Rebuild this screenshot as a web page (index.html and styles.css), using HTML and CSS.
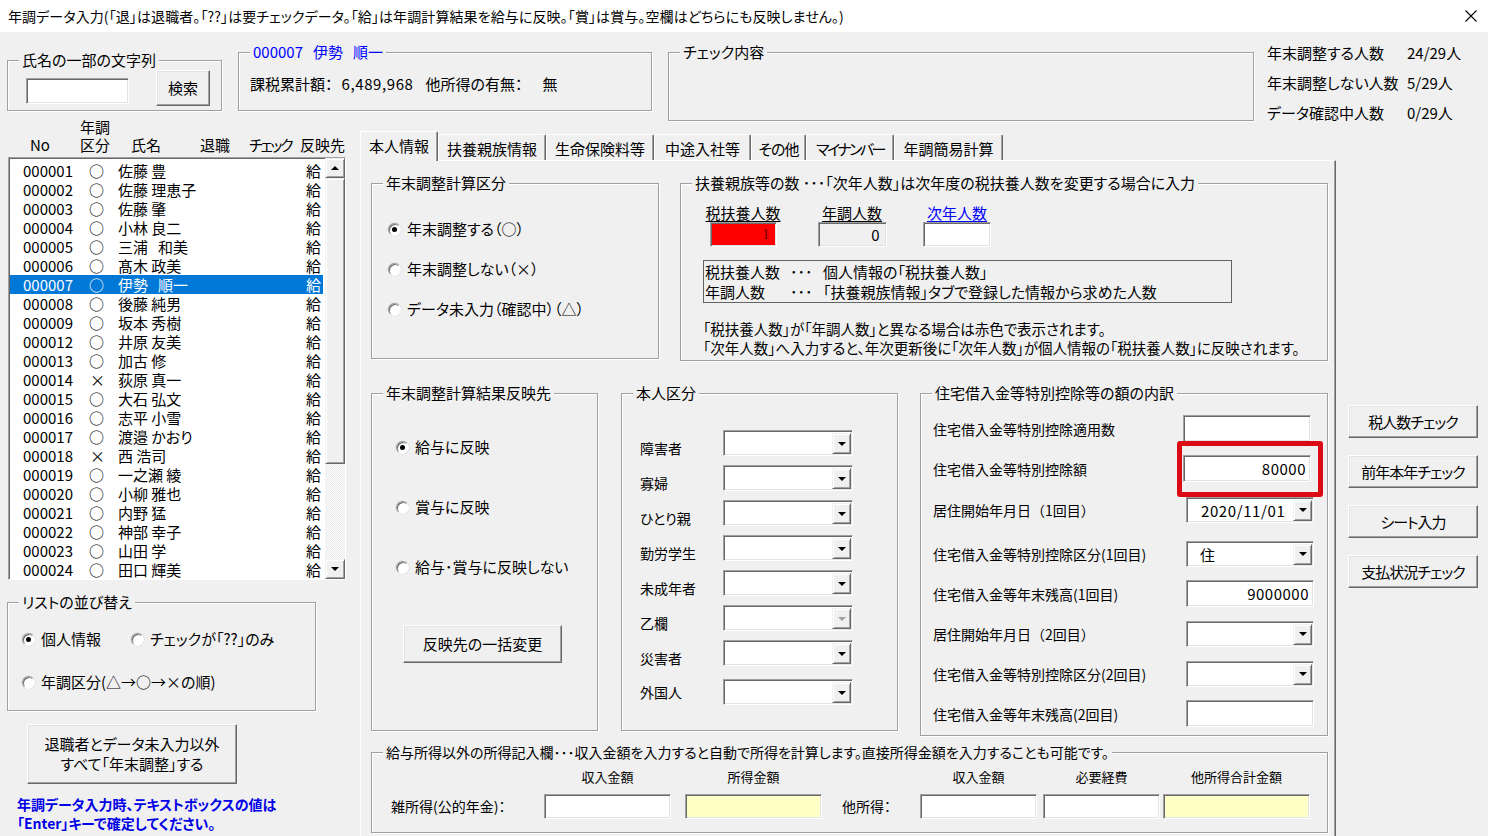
FILE: index.html
```html
<!DOCTYPE html>
<html lang="ja">
<head>
<meta charset="utf-8">
<title>年調データ入力</title>
<link rel="stylesheet" href="styles.css">
</head>
<body>
<div class="titlebar">
  <span>年調データ入力(「退」は退職者。「??」は要チェックデータ。「給」は年調計算結果を給与に反映。「賞」は賞与。空欄はどちらにも反映しません。)</span>
  <svg class="close" width="12" height="12" viewBox="0 0 12 12"><path d="M0.5 0.5L11.5 11.5M11.5 0.5L0.5 11.5" stroke="#000" stroke-width="1.1" fill="none"/></svg>
</div>

<div class="top">
  <div class="group g-search">
    <span class="legend">氏名の一部の文字列</span>
    <div class="tb tb-search"></div>
    <div class="btn btn-search">検索</div>
  </div>
  <div class="group g-person">
    <span class="legend blue">000007&nbsp;&nbsp;&nbsp;伊勢&nbsp;&nbsp;&nbsp;順一</span>
    <div class="pinfo"><span>課税累計額：</span><span class="pv1">6,489,968</span><span class="pv2">他所得の有無：</span><span class="pv3">無</span></div>
  </div>
  <div class="group g-check">
    <span class="legend">チェック内容</span>
  </div>
  <div class="stats">
    <span>年末調整する人数</span><span>24/29人</span>
    <span>年末調整しない人数</span><span>5/29人</span>
    <span>データ確認中人数</span><span>0/29人</span>
  </div>
</div>

<div class="bottom">
  <div class="left">
    <div class="lhead">
      <span>No</span>
      <span>年調<br>区分</span>
      <span>氏名</span>
      <span>退職</span>
      <span class="nar">チェック</span>
      <span>反映先</span>
    </div>
    <div class="listbox">
      <div class="rows">
        <div class="row"><span>000001</span><span>○</span><span>佐藤 豊</span><span>給</span></div>
        <div class="row"><span>000002</span><span>○</span><span>佐藤 理恵子</span><span>給</span></div>
        <div class="row"><span>000003</span><span>○</span><span>佐藤 肇</span><span>給</span></div>
        <div class="row"><span>000004</span><span>○</span><span>小林 良二</span><span>給</span></div>
        <div class="row"><span>000005</span><span>○</span><span>三浦&nbsp;&nbsp;&nbsp;和美</span><span>給</span></div>
        <div class="row"><span>000006</span><span>○</span><span>髙木 政美</span><span>給</span></div>
        <div class="row sel"><span>000007</span><span>○</span><span>伊勢&nbsp;&nbsp;&nbsp;順一</span><span>給</span></div>
        <div class="row"><span>000008</span><span>○</span><span>後藤 純男</span><span>給</span></div>
        <div class="row"><span>000009</span><span>○</span><span>坂本 秀樹</span><span>給</span></div>
        <div class="row"><span>000012</span><span>○</span><span>井原 友美</span><span>給</span></div>
        <div class="row"><span>000013</span><span>○</span><span>加古 修</span><span>給</span></div>
        <div class="row"><span>000014</span><span class="x">×</span><span>荻原 真一</span><span>給</span></div>
        <div class="row"><span>000015</span><span>○</span><span>大石 弘文</span><span>給</span></div>
        <div class="row"><span>000016</span><span>○</span><span>志平 小雪</span><span>給</span></div>
        <div class="row"><span>000017</span><span>○</span><span>渡邉 かおり</span><span>給</span></div>
        <div class="row"><span>000018</span><span class="x">×</span><span>西 浩司</span><span>給</span></div>
        <div class="row"><span>000019</span><span>○</span><span>一之瀬 綾</span><span>給</span></div>
        <div class="row"><span>000020</span><span>○</span><span>小柳 雅也</span><span>給</span></div>
        <div class="row"><span>000021</span><span>○</span><span>内野 猛</span><span>給</span></div>
        <div class="row"><span>000022</span><span>○</span><span>神部 幸子</span><span>給</span></div>
        <div class="row"><span>000023</span><span>○</span><span>山田 学</span><span>給</span></div>
        <div class="row"><span>000024</span><span>○</span><span>田口 輝美</span><span>給</span></div>
      </div>
      <div class="sb">
        <div class="sb-btn"><i class="up"></i></div>
        <div class="sb-thumb"></div>
        <div class="sb-track"></div>
        <div class="sb-btn"><i class="down"></i></div>
      </div>
    </div>

    <div class="group g-sort">
      <span class="legend">リストの並び替え</span>
      <div class="sort-row1">
        <label class="ri ri-w"><span class="rd on"></span><span>個人情報</span></label>
        <label class="ri"><span class="rd"></span><span>チェックが「??」のみ</span></label>
      </div>
      <label class="ri sort-row2"><span class="rd"></span><span>年調区分(△→○→×の順)</span></label>
    </div>

    <div class="btn btn-big">退職者とデータ未入力以外<br>すべて「年末調整」する</div>

    <div class="note">年調データ入力時、テキストボックスの値は<br>「Enter」キーで確定してください。</div>
  </div>

  <div class="center">
    <div class="tabstrip">
      <div class="tab active t1">本人情報</div>
      <div class="tab t2">扶養親族情報</div>
      <div class="tab t3">生命保険料等</div>
      <div class="tab t4">中途入社等</div>
      <div class="tab t5">その他</div>
      <div class="tab t6">マイナンバー</div>
      <div class="tab t7">年調簡易計算</div>
    </div>
    <div class="panel">
      <div class="prow prow1">
        <div class="group g-a">
          <span class="legend">年末調整計算区分</span>
          <div class="rlist">
            <label class="ri"><span class="rd on"></span><span>年末調整する（○）</span></label>
            <label class="ri"><span class="rd"></span><span>年末調整しない（×）</span></label>
            <label class="ri"><span class="rd"></span><span>データ未入力（確認中）（△）</span></label>
          </div>
        </div>
        <div class="group g-b">
          <span class="legend">扶養親族等の数 ･･･「次年人数」は次年度の税扶養人数を変更する場合に入力</span>
          <div class="fcols">
            <div class="fc fc1"><span class="ul">税扶養人数</span><div class="tb fbox red">1</div></div>
            <div class="fc fc2"><span class="ul">年調人数</span><div class="tb fbox gray">0</div></div>
            <div class="fc fc3"><span class="ul blue">次年人数</span><div class="tb fbox w3"></div></div>
          </div>
          <div class="explain">
            <span>税扶養人数</span><span>･･･</span><span>個人情報の「税扶養人数」</span>
            <span>年調人数</span><span>･･･</span><span>「扶養親族情報」タブで登録した情報から求めた人数</span>
          </div>
          <div class="bnote">「税扶養人数」が「年調人数」と異なる場合は赤色で表示されます。<br>「次年人数」へ入力すると、年次更新後に「次年人数」が個人情報の「税扶養人数」に反映されます。</div>
        </div>
      </div>

      <div class="prow prow2">
        <div class="group g-c">
          <span class="legend">年末調整計算結果反映先</span>
          <div class="rlist rlist-c">
            <label class="ri"><span class="rd on"></span><span>給与に反映</span></label>
            <label class="ri"><span class="rd"></span><span>賞与に反映</span></label>
            <label class="ri"><span class="rd"></span><span>給与･賞与に反映しない</span></label>
          </div>
          <div class="btn btn-bulk">反映先の一括変更</div>
        </div>
        <div class="group g-d">
          <span class="legend">本人区分</span>
          <div class="drows">
            <div class="drow"><span class="dlabel">障害者</span><div class="combo"><span class="cval"></span><span class="dd"><i></i></span></div></div>
            <div class="drow"><span class="dlabel">寡婦</span><div class="combo"><span class="cval"></span><span class="dd"><i></i></span></div></div>
            <div class="drow"><span class="dlabel">ひとり親</span><div class="combo"><span class="cval"></span><span class="dd"><i></i></span></div></div>
            <div class="drow"><span class="dlabel">勤労学生</span><div class="combo"><span class="cval"></span><span class="dd"><i></i></span></div></div>
            <div class="drow"><span class="dlabel">未成年者</span><div class="combo"><span class="cval"></span><span class="dd"><i></i></span></div></div>
            <div class="drow"><span class="dlabel">乙欄</span><div class="combo"><span class="cval"></span><span class="dd dis"><i></i></span></div></div>
            <div class="drow"><span class="dlabel">災害者</span><div class="combo"><span class="cval"></span><span class="dd"><i></i></span></div></div>
            <div class="drow last"><span class="dlabel">外国人</span><div class="combo"><span class="cval"></span><span class="dd"><i></i></span></div></div>
          </div>
        </div>
        <div class="group g-e">
          <span class="legend">住宅借入金等特別控除等の額の内訳</span>
          <div class="hrows">
            <div class="hrow"><span class="hlabel">住宅借入金等特別控除適用数</span><div class="tb hin"></div></div>
            <div class="hrow"><span class="hlabel">住宅借入金等特別控除額</span><div class="hl"><div class="tb hin num">80000</div></div></div>
            <div class="hrow s r3"><span class="hlabel">居住開始年月日（1回目）</span><div class="combo hcombo"><span class="cval date">2020/11/01</span><span class="dd"><i></i></span></div></div>
            <div class="hrow s r4"><span class="hlabel">住宅借入金等特別控除区分(1回目)</span><div class="combo hcombo"><span class="cval">住</span><span class="dd"><i></i></span></div></div>
            <div class="hrow s"><span class="hlabel">住宅借入金等年末残高(1回目)</span><div class="tb hin num">9000000</div></div>
            <div class="hrow s"><span class="hlabel">居住開始年月日（2回目）</span><div class="combo hcombo"><span class="cval"></span><span class="dd"><i></i></span></div></div>
            <div class="hrow s"><span class="hlabel">住宅借入金等特別控除区分(2回目)</span><div class="combo hcombo"><span class="cval"></span><span class="dd"><i></i></span></div></div>
            <div class="hrow s"><span class="hlabel">住宅借入金等年末残高(2回目)</span><div class="tb hin"></div></div>
          </div>
        </div>
      </div>

      <div class="prow prow3">
        <div class="group g-f">
          <span class="legend small">給与所得以外の所得記入欄･･･収入金額を入力すると自動で所得を計算します。直接所得金額を入力することも可能です。</span>
          <div class="frow">
            <span class="flab fl1">雑所得(公的年金)：</span>
            <div class="fcol c1"><span class="fhead">収入金額</span><div class="tb fin"></div></div>
            <div class="fcol c2"><span class="fhead">所得金額</span><div class="tb fin yellow"></div></div>
            <span class="flab fl2">他所得：</span>
            <div class="fcol c3"><span class="fhead">収入金額</span><div class="tb fin"></div></div>
            <div class="fcol c4"><span class="fhead">必要経費</span><div class="tb fin"></div></div>
            <div class="fcol c5"><span class="fhead">他所得合計金額</span><div class="tb fin yellow"></div></div>
          </div>
        </div>
      </div>
    </div>
  </div>

  <div class="right">
    <div class="btn rbtn">税人数チェック</div>
    <div class="btn rbtn">前年本年チェック</div>
    <div class="btn rbtn">シート入力</div>
    <div class="btn rbtn">支払状況チェック</div>
  </div>
</div>
</body>
</html>
```

FILE: styles.css
```css
* { box-sizing: border-box; }

body {
  margin: 0;
  width: 1488px;
  height: 836px;
  overflow: hidden;
  background: #f0f0f0;
  font-family: "Noto Sans CJK JP", "Noto Sans", sans-serif;
  font-size: 15px;
  line-height: 20px;
  color: #000;
  font-feature-settings: "palt";
}

.blue { color: #0000ff; }

/* title bar */
.titlebar {
  height: 32px;
  background: #fff;
  display: flex;
  align-items: center;
  justify-content: space-between;
  padding: 0 11px 0 8px;
  font-size: 14px;
  letter-spacing: 0.1px;
}
.close { display: block; }

/* generic controls */
.group {
  position: relative;
  border: 1px solid #a0a0a0;
  box-shadow: 1px 1px 0 #fff, inset 1px 1px 0 #fff;
}
.legend {
  position: absolute;
  top: -11px;
  left: 11px;
  padding: 0 3px;
  background: #f0f0f0;
  line-height: 20px;
  white-space: nowrap;
}
.legend.small { font-size: 14px; }

.tb {
  background: #fff;
  border: 1px solid;
  border-color: #a0a0a0 #fff #fff #a0a0a0;
  box-shadow: inset 1px 1px 0 #696969, inset -1px -1px 0 #e3e3e3;
}

.btn {
  background: #f0f0f0;
  border: 1px solid;
  border-color: #fff #696969 #696969 #fff;
  box-shadow: inset -1px -1px 0 #a0a0a0, inset 1px 1px 0 #e3e3e3;
  display: flex;
  align-items: center;
  justify-content: center;
  text-align: center;
}

.ri {
  display: flex;
  align-items: center;
  gap: 6px;
  line-height: 20px;
  white-space: nowrap;
}
.rd {
  position: relative;
  flex: none;
  width: 13px;
  height: 13px;
  border-radius: 50%;
  background: #fff;
  border: 1px solid;
  border-color: #a0a0a0 #fff #fff #a0a0a0;
  box-shadow: inset 1px 1px 0 #696969, 0 0 0 0.5px #d8d8d8;
}
.rd.on::after {
  content: "";
  position: absolute;
  left: 3px;
  top: 3px;
  width: 5px;
  height: 5px;
  border-radius: 50%;
  background: #000;
}

.combo {
  display: flex;
  width: 130px;
  height: 26px;
  padding: 2px 1px 1px 2px;
  background: #fff;
  border: 1px solid;
  border-color: #a0a0a0 #fff #fff #a0a0a0;
  box-shadow: inset 1px 1px 0 #696969, inset -1px -1px 0 #e3e3e3;
}
.cval {
  flex: 1;
  padding-left: 11px;
  line-height: 21px;
  white-space: nowrap;
}
.dd {
  width: 19px;
  background: #f0f0f0;
  border: 1px solid;
  border-color: #f0f0f0 #696969 #696969 #f0f0f0;
  box-shadow: inset 1px 1px 0 #fff, inset -1px -1px 0 #a0a0a0;
  display: flex;
  align-items: center;
  justify-content: center;
}
.dd i {
  display: block;
  width: 0;
  height: 0;
  border-left: 4px solid transparent;
  border-right: 4px solid transparent;
  border-top: 4px solid #000;
}
.dd.dis i { border-top-color: #a0a0a0; }

/* top row */
.top {
  display: flex;
  align-items: flex-start;
  height: 86px;
}
.g-search {
  margin: 28px 0 0 7px;
  width: 215px;
  height: 51px;
  display: flex;
  align-items: flex-start;
  padding-left: 18px;
}
.tb-search {
  margin-top: 17px;
  width: 103px;
  height: 26px;
}
.btn-search {
  margin: 9px 0 0 27px;
  width: 54px;
  height: 36px;
}
.g-person {
  margin: 20px 0 0 16px;
  width: 414px;
  height: 59px;
  padding: 21px 0 0 11px;
}
.pinfo { display: flex; white-space: nowrap; }
.pv1 { margin-left: 9px; letter-spacing: 0.6px; }
.pv2 { margin-left: 12px; }
.pv3 { margin-left: 20px; }
.g-check {
  margin: 20px 0 0 16px;
  width: 586px;
  height: 69px;
}
.stats {
  margin: 6px 0 0 13px;
  display: grid;
  grid-template-columns: 140px auto;
  grid-auto-rows: 30px;
  line-height: 30px;
  white-space: nowrap;
}

/* bottom area */
.bottom {
  display: flex;
  height: 718px;
}
.left {
  width: 360px;
  flex: none;
  padding-left: 7px;
}
.lhead {
  display: grid;
  grid-template-columns: 50px 51px 69px 49px 51px auto;
  align-items: end;
  height: 39px;
  padding: 0 0 4px 23px;
  line-height: 18px;
  white-space: nowrap;
}
.lhead .nar { letter-spacing: -2.2px; }
.listbox {
  margin-left: 1px;
  width: 338px;
  height: 423px;
  display: flex;
  background: #fff;
  border: 1px solid;
  border-color: #a0a0a0 #fff #fff #a0a0a0;
  box-shadow: inset 1px 1px 0 #696969;
}
.rows {
  width: 316px;
  flex: none;
  padding: 3px 2px 0 1px;
}
.row {
  display: grid;
  grid-template-columns: 66px 29px 1fr auto;
  height: 19px;
  line-height: 19px;
  padding: 0 2px 0 13px;
  white-space: pre;
}
.row .x { padding-left: 1px; }
.row.sel { background: #0078d7; color: #fff; }
.sb {
  width: 20px;
  flex: none;
  display: flex;
  flex-direction: column;
  background-color: #fff;
  background-image: repeating-conic-gradient(#e8e8e8 0 25%, #fff 0 50%);
  background-size: 2px 2px;
}
.sb-btn, .sb-thumb {
  background: #f0f0f0;
  border: 1px solid;
  border-color: #f0f0f0 #696969 #696969 #f0f0f0;
  box-shadow: inset 1px 1px 0 #fff, inset -1px -1px 0 #a0a0a0;
}
.sb-btn {
  height: 20px;
  display: flex;
  align-items: center;
  justify-content: center;
}
.sb-thumb { height: 286px; }
.sb-track { flex: 1; }
.sb-btn i {
  display: block;
  width: 0;
  height: 0;
  border-left: 4px solid transparent;
  border-right: 4px solid transparent;
}
.sb-btn i.up { border-bottom: 4px solid #000; }
.sb-btn i.down { border-top: 4px solid #000; }

.g-sort {
  margin-top: 22px;
  width: 309px;
  height: 109px;
  padding: 26px 0 0 14px;
}
.sort-row1 { display: flex; }
.ri-w { width: 109px; }
.sort-row2 { margin-top: 23px; }

.btn-big {
  margin: 13px 0 0 20px;
  width: 210px;
  height: 60px;
  line-height: 20px;
}
.note {
  margin: 11px 0 0 10px;
  color: #0000e6;
  font-weight: bold;
  font-size: 14px;
  line-height: 19px;
  white-space: nowrap;
}

/* tabs */
.center {
  width: 976px;
  flex: none;
}
.tabstrip {
  margin-top: 13px;
  height: 29px;
  display: flex;
  align-items: flex-end;
  position: relative;
  z-index: 1;
}
.tab {
  height: 26px;
  padding-top: 2px;
  line-height: 23px;
  text-align: center;
  white-space: nowrap;
  border: 1px solid;
  border-bottom: 0;
  border-color: #fff #696969 transparent #fff;
  box-shadow: inset -1px 0 0 #a0a0a0;
  border-radius: 2px 2px 0 0;
  background: #f0f0f0;
}
.tab.active {
  height: 30px;
  padding-top: 1px;
  margin-bottom: -1px;
  line-height: 26px;
}
.t1 { width: 78px; }
.t2 { width: 108px; }
.t3 { width: 108px; }
.t4 { width: 97px; }
.t5 { width: 55px; letter-spacing: -1px; }
.t6 { width: 88px; letter-spacing: -2.5px; }
.t7 { width: 109px; }

.panel {
  height: 700px;
  border: 1px solid;
  border-color: #fff #696969 #696969 #fff;
  box-shadow: inset -1px -1px 0 #a0a0a0;
  padding-left: 10px;
}
.prow {
  display: flex;
  align-items: flex-start;
}
.prow1 { margin-top: 22px; }
.prow2 { margin-top: 32px; }
.prow3 { margin-top: 16px; }

.g-a {
  width: 288px;
  height: 176px;
}
.rlist {
  display: flex;
  flex-direction: column;
  gap: 20px;
  padding: 35px 0 0 16px;
}
.g-b {
  margin-left: 21px;
  width: 648px;
  height: 178px;
  padding: 19px 0 0 12px;
}
.fcols { display: flex; }
.fc {
  width: 100px;
  display: flex;
  flex-direction: column;
  align-items: center;
}
.fc2 { margin-left: 9px; }
.fc3 { margin-left: 5px; }
.ul {
  text-decoration: underline;
  text-underline-offset: 2px;
  line-height: 19px;
  white-space: nowrap;
}
.fbox {
  width: 67px;
  height: 25px;
  text-align: right;
  padding-right: 6px;
  line-height: 23px;
}
.fbox.red {
  background: #ff0000;
  color: #6a0000;
  font-family: "Liberation Serif", serif;
}
.fbox.gray { background: #f0f0f0; width: 69px; }
.fbox.w3 { width: 68px; }
.explain {
  margin: 13px 0 0 10px;
  width: 529px;
  height: 43px;
  border: 1px solid #646464;
  padding: 1px 0 0 1px;
  display: grid;
  grid-template-columns: 85px 33px auto;
  line-height: 19px;
  white-space: nowrap;
}
.bnote {
  margin: 16px 0 0 10px;
  font-size: 14.5px;
  line-height: 19px;
  white-space: nowrap;
}

.g-c {
  width: 227px;
  height: 338px;
}
.rlist-c {
  gap: 40px;
  padding: 43px 0 0 24px;
}
.btn-bulk {
  margin: 48px 0 0 31px;
  width: 159px;
  height: 38px;
}

.g-d {
  margin-left: 23px;
  width: 277px;
  height: 338px;
}
.drows { padding: 36px 0 0 18px; }
.drow {
  display: flex;
  align-items: flex-start;
  height: 35px;
}
.dlabel {
  width: 83px;
  margin-top: 8px;
  font-size: 14px;
  line-height: 20px;
}
.drow.last { margin-top: 4px; }
.drow.last .dlabel { margin-top: 3px; }

.g-e {
  margin-left: 22px;
  width: 408px;
  height: 343px;
}
.hrows { padding: 21px 0 0 12px; }
.hrow {
  display: flex;
  align-items: center;
  height: 27px;
  margin-top: 13px;
}
.hrow:first-child { margin-top: 0; }
.hrow.r3 { margin-top: 14px; }
.hrow.r4 { margin-top: 17px; }
.hlabel {
  width: 250px;
  flex: none;
  font-size: 14px;
  line-height: 20px;
  white-space: nowrap;
  font-feature-settings: normal;
}
.hrow.s .hlabel { width: 253px; }
.hin {
  width: 128px;
  height: 27px;
}
.hcombo {
  width: 128px;
  height: 26px;
}
.cval.date { padding-left: 12px; letter-spacing: 0.6px; }
.num {
  text-align: right;
  padding-right: 4px;
  line-height: 25px;
  letter-spacing: 0.5px;
}
.hl { position: relative; }
.hl::after {
  content: "";
  position: absolute;
  left: -6px;
  right: -12px;
  top: -14px;
  bottom: -15px;
  border: 5px solid #dc0a14;
  border-radius: 3px;
  pointer-events: none;
}

.g-f {
  width: 957px;
  height: 81px;
}
.frow {
  display: flex;
  align-items: flex-end;
  padding: 15px 0 0 19px;
}
.flab {
  font-size: 14px;
  line-height: 25px;
  white-space: nowrap;
}
.fl1 { width: 153px; }
.fl2 { width: 78px; margin-left: 20px; }
.fcol {
  display: flex;
  flex-direction: column;
  align-items: center;
}
.fhead {
  font-size: 13px;
  line-height: 18px;
  margin-bottom: 8px;
  white-space: nowrap;
}
.fin { width: 100%; height: 25px; }
.fin.yellow { background: #ffffc6; }
.c1 { width: 127px; }
.c2 { width: 137px; margin-left: 14px; }
.c3 { width: 117px; }
.c4 { width: 117px; margin-left: 6px; }
.c5 { width: 147px; margin-left: 3px; }

/* right buttons */
.right {
  margin-left: 12px;
  padding-top: 287px;
  display: flex;
  flex-direction: column;
  gap: 17px;
}
.rbtn {
  width: 130px;
  height: 33px;
  letter-spacing: -1px;
}
```
